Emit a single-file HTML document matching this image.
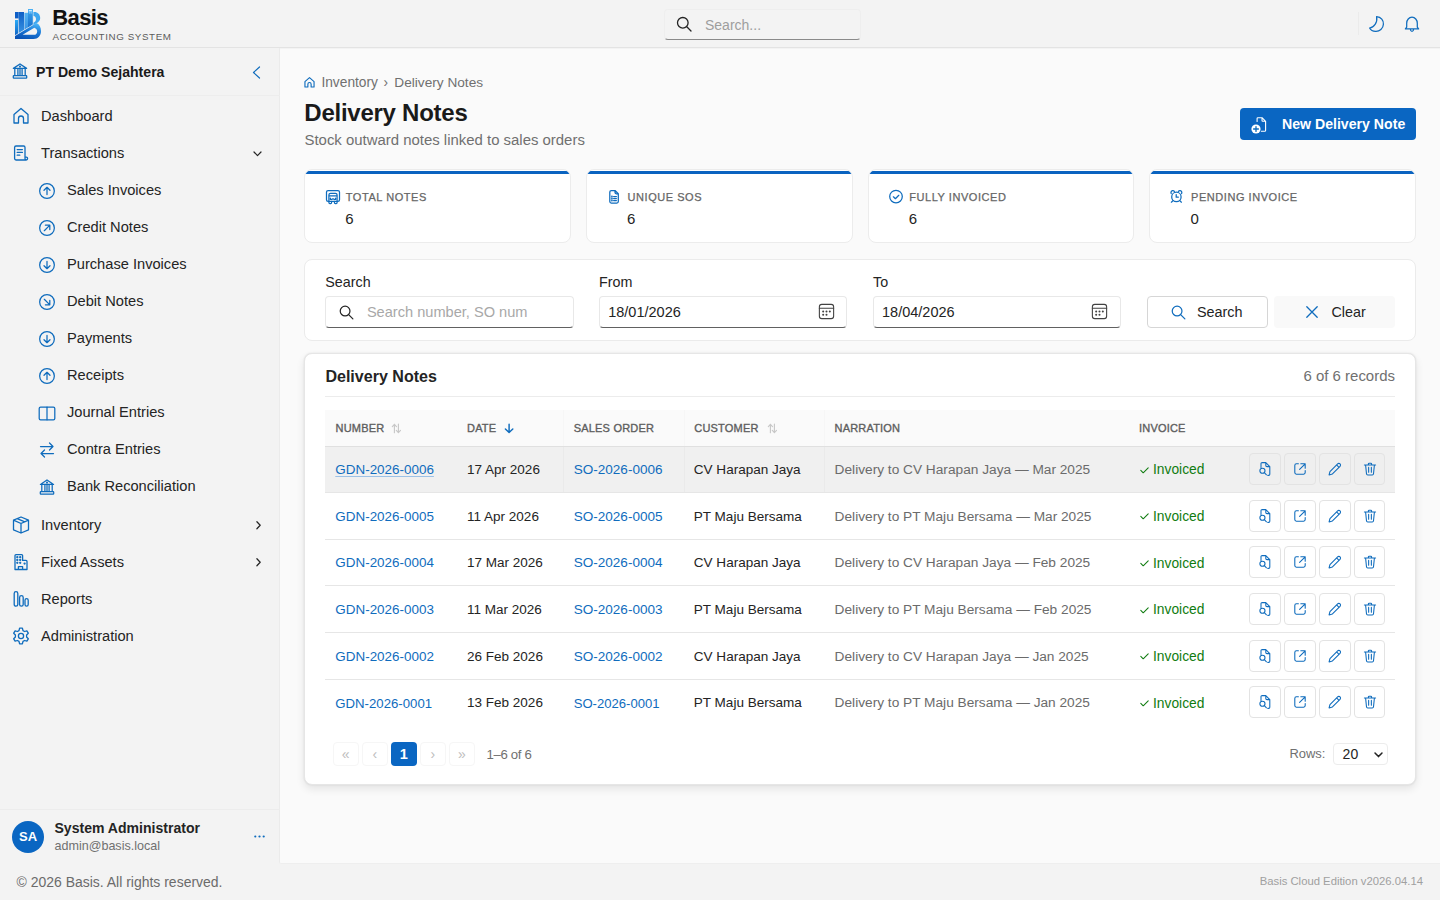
<!DOCTYPE html>
<html><head><meta charset="utf-8">
<style>
*{box-sizing:border-box;margin:0;padding:0}
html,body{width:1440px;height:900px;overflow:hidden}
body{font-family:"Liberation Sans",sans-serif;color:#242424;background:#fafafa;position:relative}
.a{position:absolute;white-space:nowrap;line-height:1}
svg{position:absolute;overflow:visible}
.bx{position:absolute}
</style></head><body>
<div class="bx" style="left:0;top:0;width:1440px;height:48px;background:#f3f3f3;border-bottom:1px solid #e3e3e3"></div>
<div class="bx" style="left:0;top:48px;width:280px;height:852px;background:#f3f3f3"></div>
<div class="bx" style="left:279px;top:48px;width:1161px;height:816px;background:#fafafa;border-left:1px solid #ebebeb;border-bottom:1px solid #eeeeee;border-bottom-left-radius:2px;box-shadow:inset 0 1px 1px rgba(0,0,0,0.03)"></div>
<div class="bx" style="left:280px;top:864px;width:1160px;height:36px;background:#f3f3f3"></div>
<svg style="left:12px;top:6px" width="32" height="36" viewBox="0 0 32 36">
<defs>
<linearGradient id="lg1" x1="0" y1="0" x2="0" y2="1"><stop offset="0" stop-color="#2aaaf6"/><stop offset="1" stop-color="#0b58bd"/></linearGradient>
<linearGradient id="lg3" x1="0" y1="0" x2="0" y2="1"><stop offset="0" stop-color="#0e5ec6"/><stop offset="1" stop-color="#3f9fe8"/></linearGradient>
<linearGradient id="lg4" x1="0" y1="0" x2="0" y2="1"><stop offset="0" stop-color="#55b4f2"/><stop offset="1" stop-color="#2a82dc"/></linearGradient>
<linearGradient id="lg5" x1="0" y1="0" x2="0" y2="1"><stop offset="0" stop-color="#3aa6f0"/><stop offset="1" stop-color="#0c5cc0"/></linearGradient>
<linearGradient id="lg2" x1="0.7" y1="0" x2="0.3" y2="1"><stop offset="0" stop-color="#4ab4f6"/><stop offset="0.45" stop-color="#1b7ad8"/><stop offset="1" stop-color="#0a52b4"/></linearGradient>
<clipPath id="cp1"><path d="M0 0 H32 V11.8 L3 29.2 L0 29.2 Z"/></clipPath>
</defs>
<g clip-path="url(#cp1)">
<rect x="3" y="14" width="3" height="18" fill="url(#lg1)"/>
<rect x="3" y="6" width="3.6" height="6.4" fill="#0e5ec6"/>
<rect x="6.6" y="6" width="5.4" height="26" fill="url(#lg3)"/>
<rect x="12.4" y="6.8" width="3.6" height="26" fill="url(#lg4)"/>
<rect x="16" y="3" width="4.8" height="26" fill="url(#lg5)"/>
</g>
<rect x="16" y="3" width="4.8" height="3.4" fill="#4ab0f4"/><rect x="16.9" y="4.2" width="3" height="1.1" fill="#eef7ff"/>
<rect x="16.9" y="6.6" width="1.6" height="0.7" fill="#cfe7ff"/><rect x="19" y="6.6" width="0.9" height="0.7" fill="#cfe7ff"/>
<path fill-rule="evenodd" d="M21.4 6 H22.4 C25.8 6 28.2 8.6 28.2 12 C28.2 14.4 26.8 16.2 24.6 17.2 L21.4 19 Z M21.5 10 C23.2 10.2 24 11.6 24 13.2 C24 14.6 23.1 15.8 21.5 16.7 Z" fill="#3ea6ef"/>

<path fill-rule="evenodd" d="M3 29.9 L24.4 17 C27.6 18.4 29 21.6 29 25 C29 29.6 26 33 21.5 33 H3 Z M10.6 28.8 L22.3 21.7 C24.4 22.4 25.2 24 25.2 25.4 C25.2 27.4 23.8 28.8 22 28.8 Z" fill="url(#lg2)"/>
</svg>
<div class="a " style="left:52.3px;top:7.30px;font-size:22px;font-weight:700;color:#111;letter-spacing:-0.6px">Basis</div>
<div class="a " style="left:52.5px;top:31.97px;font-size:9.8px;letter-spacing:0.6px;color:#5c5c5c">ACCOUNTING SYSTEM</div>
<div class="bx" style="left:664px;top:9px;width:197px;height:31px;background:#f3f3f3;border:1px solid #eeeeee;border-bottom:1px solid #8a8a8a;border-radius:4px"></div>
<svg style="left:676px;top:16px" width="16" height="16" viewBox="0 0 16 16"><g style="fill:none;stroke:#242424;stroke-linecap:round;stroke-linejoin:round;stroke-width:1.3" ><circle cx="6.8" cy="6.8" r="5.3"/><path d="M10.8 10.8 L15 15"/></g></svg>
<div class="a " style="left:705px;top:17.60px;font-size:14px;color:#9e9e9e">Search...</div>
<div class="bx" style="left:1358px;top:12px;width:1px;height:23px;background:#ebebeb"></div>
<svg style="left:1366px;top:14px" width="20" height="20" viewBox="0 0 20 20"><g style="fill:none;stroke:#0f6cbd;stroke-linecap:round;stroke-linejoin:round;stroke-width:1.25" ><path d="M10.6 2.6 C 15.2 3 17.6 6.6 17.4 10.2 C 17.2 14.6 13.6 17.6 9.6 17.4 C 7 17.3 4.4 15.6 3.6 14 C 7.8 13.6 11.8 8.6 10.6 2.6 Z"/></g></svg>
<svg style="left:1402px;top:15px" width="20" height="20" viewBox="0 0 20 20"><g style="fill:none;stroke:#0f6cbd;stroke-linecap:round;stroke-linejoin:round;stroke-width:1.25" ><path d="M3.4 13.9 H16.6 L15.3 12.2 V8.2 C15.3 5 13 2.2 10 2.2 C7 2.2 4.7 5 4.7 8.2 V12.2 Z M8.4 14.2 C8.5 15.7 9.2 16.4 10 16.4 C10.8 16.4 11.5 15.7 11.6 14.2"/></g></svg>
<svg style="left:10.2px;top:61.4px" width="20" height="20" viewBox="0 0 20 20"><g style="fill:none;stroke:#0f6cbd;stroke-linecap:round;stroke-linejoin:round;stroke-width:1.3" ><path d="M3.4 7.4 L10 3 L16.6 7.4 Z"/><path d="M4.8 8.2 V13.8 M7.9 8.2 V13.8 M10 8.2 V13.8 M12.1 8.2 V13.8 M15.2 8.2 V13.8"/><rect x="3.3" y="14.6" width="13.4" height="2.6" rx="0.6"/><circle cx="10" cy="5.6" r="0.45"/></g></svg>
<div class="a " style="left:36px;top:65.02px;font-size:14.1px;font-weight:700;color:#1a1a1a">PT Demo Sejahtera</div>
<svg style="left:252px;top:66px" width="9" height="13" viewBox="0 0 9 13"><g style="fill:none;stroke:#0f6cbd;stroke-linecap:round;stroke-linejoin:round;stroke-width:1.2" ><path d="M7.5 1 L1.5 6.5 L7.5 12"/></g></svg>
<div class="bx" style="left:0;top:95px;width:280px;height:1px;background:#ededed"></div>
<svg style="left:10.5px;top:106.1px" width="20" height="20" viewBox="0 0 20 20"><g style="fill:none;stroke:#0f6cbd;stroke-linecap:round;stroke-linejoin:round;stroke-width:1.3" ><path d="M3 17 V8.6 L10 2.5 L17 8.6 V17 H12.5 V12.5 C12.5 11 11.4 10 10 10 C8.6 10 7.5 11 7.5 12.5 V17 Z"/></g></svg>
<div class="a " style="left:41px;top:108.75px;font-size:14.65px;color:#242424">Dashboard</div>
<svg style="left:10.5px;top:142.9px" width="20" height="20" viewBox="0 0 20 20"><g style="fill:none;stroke:#0f6cbd;stroke-linecap:round;stroke-linejoin:round;stroke-width:1.3" ><path d="M14 14.2 V4.4 C14 3.6 13.4 3 12.6 3 H5 C4.2 3 3.6 3.6 3.6 4.4 V15.6 C3.6 16.4 4.2 17 5 17 H15.2 C16 17 16.6 16.4 16.6 15.6 V15.4 C16.6 14.7 16 14.2 15.3 14.2 H14 M14 14.2 V15.6 C14 16.4 14.6 17 15.2 17 M6.2 6.6 H11.4 M6.2 9.4 H11.4 M6.2 12.2 H8.8"/></g></svg>
<div class="a " style="left:41px;top:145.55px;font-size:14.65px;color:#242424">Transactions</div>
<svg style="left:252.5px;top:150.9px" width="9" height="6" viewBox="0 0 9 6"><g style="fill:none;stroke:#242424;stroke-linecap:round;stroke-linejoin:round;stroke-width:1.2" ><path d="M1 1 L4.5 4.6 L8 1"/></g></svg>
<svg style="left:36.9px;top:180.8px" width="20" height="20" viewBox="0 0 20 20"><g style="fill:none;stroke:#0f6cbd;stroke-linecap:round;stroke-linejoin:round;stroke-width:1.25" ><circle cx="10" cy="10" r="7.35"/><path d="M10 13.6 V6.4 M7 9.3 L10 6.3 L13 9.3"/></g></svg>
<div class="a " style="left:67px;top:182.55px;font-size:14.65px;color:#242424">Sales Invoices</div>
<svg style="left:36.9px;top:217.8px" width="20" height="20" viewBox="0 0 20 20"><g style="fill:none;stroke:#0f6cbd;stroke-linecap:round;stroke-linejoin:round;stroke-width:1.25" ><circle cx="10" cy="10" r="7.35"/><path d="M7.3 12.7 L12.6 7.4 M8.4 7.2 H12.8 V11.6"/></g></svg>
<div class="a " style="left:67px;top:219.55px;font-size:14.65px;color:#242424">Credit Notes</div>
<svg style="left:36.9px;top:254.79999999999998px" width="20" height="20" viewBox="0 0 20 20"><g style="fill:none;stroke:#0f6cbd;stroke-linecap:round;stroke-linejoin:round;stroke-width:1.25" ><circle cx="10" cy="10" r="7.35"/><path d="M10 6.4 V13.6 M7 10.7 L10 13.7 L13 10.7"/></g></svg>
<div class="a " style="left:67px;top:256.55px;font-size:14.65px;color:#242424">Purchase Invoices</div>
<svg style="left:36.9px;top:291.79999999999995px" width="20" height="20" viewBox="0 0 20 20"><g style="fill:none;stroke:#0f6cbd;stroke-linecap:round;stroke-linejoin:round;stroke-width:1.25" ><circle cx="10" cy="10" r="7.35"/><path d="M7.3 7.3 L12.6 12.6 M12.8 8.4 V12.8 H8.4"/></g></svg>
<div class="a " style="left:67px;top:293.55px;font-size:14.65px;color:#242424">Debit Notes</div>
<svg style="left:36.9px;top:328.79999999999995px" width="20" height="20" viewBox="0 0 20 20"><g style="fill:none;stroke:#0f6cbd;stroke-linecap:round;stroke-linejoin:round;stroke-width:1.25" ><circle cx="10" cy="10" r="7.35"/><path d="M10 6.4 V13.6 M7 10.7 L10 13.7 L13 10.7"/></g></svg>
<div class="a " style="left:67px;top:330.55px;font-size:14.65px;color:#242424">Payments</div>
<svg style="left:36.9px;top:365.79999999999995px" width="20" height="20" viewBox="0 0 20 20"><g style="fill:none;stroke:#0f6cbd;stroke-linecap:round;stroke-linejoin:round;stroke-width:1.25" ><circle cx="10" cy="10" r="7.35"/><path d="M10 13.6 V6.4 M7 9.3 L10 6.3 L13 9.3"/></g></svg>
<div class="a " style="left:67px;top:367.55px;font-size:14.65px;color:#242424">Receipts</div>
<svg style="left:36.9px;top:402.79999999999995px" width="20" height="20" viewBox="0 0 20 20"><g style="fill:none;stroke:#0f6cbd;stroke-linecap:round;stroke-linejoin:round;stroke-width:1.25" ><rect x="2.2" y="4.2" width="15.6" height="12.6" rx="1.4"/><path d="M10 4.2 V16.8"/></g></svg>
<div class="a " style="left:67px;top:404.55px;font-size:14.65px;color:#242424">Journal Entries</div>
<svg style="left:36.9px;top:439.79999999999995px" width="20" height="20" viewBox="0 0 20 20"><g style="fill:none;stroke:#0f6cbd;stroke-linecap:round;stroke-linejoin:round;stroke-width:1.25" ><path d="M3.5 6.5 H16 M12.5 3 L16 6.5 L12.5 10 M16.5 13.5 H4 M7.5 10 L4 13.5 L7.5 17"/></g></svg>
<div class="a " style="left:67px;top:441.55px;font-size:14.65px;color:#242424">Contra Entries</div>
<svg style="left:36.9px;top:476.79999999999995px" width="20" height="20" viewBox="0 0 20 20"><g style="fill:none;stroke:#0f6cbd;stroke-linecap:round;stroke-linejoin:round;stroke-width:1.25" ><path d="M3.4 7.4 L10 3 L16.6 7.4 Z"/><path d="M4.8 8.2 V13.8 M7.9 8.2 V13.8 M10 8.2 V13.8 M12.1 8.2 V13.8 M15.2 8.2 V13.8"/><rect x="3.3" y="14.6" width="13.4" height="2.6" rx="0.6"/><circle cx="10" cy="5.6" r="0.45"/></g></svg>
<div class="a " style="left:67px;top:478.55px;font-size:14.65px;color:#242424">Bank Reconciliation</div>
<svg style="left:10.5px;top:514.9px" width="20" height="20" viewBox="0 0 20 20"><g style="fill:none;stroke:#0f6cbd;stroke-linecap:round;stroke-linejoin:round;stroke-width:1.3" ><path d="M10 2 L17.5 5.2 V14.8 L10 18 L2.5 14.8 V5.2 Z M2.5 5.2 L10 8.5 L17.5 5.2 M10 8.5 V18 M6.2 3.6 L13.8 6.9"/></g></svg>
<div class="a " style="left:41px;top:517.55px;font-size:14.65px;color:#242424">Inventory</div>
<svg style="left:255.5px;top:520.6999999999999px" width="5" height="8.5" viewBox="0 0 5 9"><g style="fill:none;stroke:#242424;stroke-linecap:round;stroke-linejoin:round;stroke-width:1.3" ><path d="M0.8 0.8 L4.3 4.5 L0.8 8.2"/></g></svg>
<svg style="left:10.5px;top:552.4px" width="20" height="20" viewBox="0 0 20 20"><g style="fill:none;stroke:#0f6cbd;stroke-linecap:round;stroke-linejoin:round;stroke-width:1.3" ><path d="M4 17.5 V3.6 C4 3 4.4 2.6 5 2.6 H10.6 C11.2 2.6 11.6 3 11.6 3.6 V8.4 H15 C15.6 8.4 16 8.8 16 9.4 V17.5 Z M7.4 17.5 V14.6 H11.6 V17.5"/><circle cx="6.3" cy="5.2" r="0.5"/><circle cx="9.2" cy="5.2" r="0.5"/><circle cx="6.3" cy="8" r="0.5"/><circle cx="9.2" cy="8" r="0.5"/><circle cx="6.3" cy="10.8" r="0.5"/><circle cx="9.2" cy="10.8" r="0.5"/><circle cx="13.6" cy="11.6" r="0.5"/></g></svg>
<div class="a " style="left:41px;top:555.05px;font-size:14.65px;color:#242424">Fixed Assets</div>
<svg style="left:255.5px;top:558.1999999999999px" width="5" height="8.5" viewBox="0 0 5 9"><g style="fill:none;stroke:#242424;stroke-linecap:round;stroke-linejoin:round;stroke-width:1.3" ><path d="M0.8 0.8 L4.3 4.5 L0.8 8.2"/></g></svg>
<svg style="left:10.5px;top:589.4px" width="20" height="20" viewBox="0 0 20 20"><g style="fill:none;stroke:#0f6cbd;stroke-linecap:round;stroke-linejoin:round;stroke-width:1.3" ><rect x="3.2" y="2.6" width="3.6" height="14.6" rx="1.8"/><rect x="8.6" y="6.6" width="3.6" height="10.6" rx="1.8"/><rect x="14" y="9.6" width="3.2" height="7.6" rx="1.6"/></g></svg>
<div class="a " style="left:41px;top:592.05px;font-size:14.65px;color:#242424">Reports</div>
<svg style="left:10.5px;top:626.2px" width="20" height="20" viewBox="0 0 20 20"><g style="fill:none;stroke:#0f6cbd;stroke-linecap:round;stroke-linejoin:round;stroke-width:1.3" ><path d="M8.6 2.2 L11.4 2.2 L12 4.6 L13.6 5.5 L15.9 4.8 L17.3 7.2 L15.6 9 V11 L17.3 12.8 L15.9 15.2 L13.6 14.5 L12 15.4 L11.4 17.8 H8.6 L8 15.4 L6.4 14.5 L4.1 15.2 L2.7 12.8 L4.4 11 V9 L2.7 7.2 L4.1 4.8 L6.4 5.5 L8 4.6 Z"/><circle cx="10" cy="10" r="2.6"/></g></svg>
<div class="a " style="left:41px;top:628.85px;font-size:14.65px;color:#242424">Administration</div>
<div class="bx" style="left:0;top:809px;width:280px;height:1px;background:#ececec"></div>
<div class="bx" style="left:12px;top:820.5px;width:32px;height:32px;border-radius:50%;background:#0a66c2"></div>
<div class="a " style="left:16.5px;top:829.95px;font-size:13px;font-weight:700;color:#fff;width:23px;text-align:center">SA</div>
<div class="a " style="left:54.5px;top:821.06px;font-size:14.05px;font-weight:700;color:#242424">System Administrator</div>
<div class="a " style="left:54.5px;top:839.53px;font-size:12.55px;color:#707070">admin@basis.local</div>
<svg style="left:254px;top:835px" width="11" height="3" viewBox="0 0 11 3"><circle cx="1.3" cy="1.5" r="1.1" fill="#0f6cbd"/><circle cx="5.5" cy="1.5" r="1.1" fill="#0f6cbd"/><circle cx="9.7" cy="1.5" r="1.1" fill="#0f6cbd"/></svg>
<div class="a " style="left:16.5px;top:876.03px;font-size:13.97px;color:#6b6b6b">© 2026 Basis. All rights reserved.</div>
<div class="a " style="right:17px;top:875.89px;font-size:11.3px;color:#a0a0a0">Basis Cloud Edition v2026.04.14</div>
<svg style="left:303px;top:75.8px" width="13" height="13" viewBox="0 0 20 20"><g style="fill:none;stroke:#0f6cbd;stroke-linecap:round;stroke-linejoin:round;stroke-width:1.75" ><path d="M3 17 V8.6 L10 2.5 L17 8.6 V17 H12.5 V12.5 C12.5 11 11.4 10 10 10 C8.6 10 7.5 11 7.5 12.5 V17 Z"/></g></svg>
<div class="a " style="left:321.4px;top:76.00px;font-size:13.76px;color:#707070">Inventory</div>
<div class="a " style="left:383.5px;top:76.00px;font-size:13.76px;color:#707070">›</div>
<div class="a " style="left:394.3px;top:76.08px;font-size:13.67px;color:#707070">Delivery Notes</div>
<div class="a " style="left:304.3px;top:101.10px;font-size:24px;font-weight:700;color:#1a1a1a;letter-spacing:-0.25px">Delivery Notes</div>
<div class="a " style="left:304.5px;top:133.11px;font-size:14.93px;color:#707070">Stock outward notes linked to sales orders</div>
<div class="bx" style="left:1240px;top:108px;width:176px;height:32px;background:#0a66c2;border-radius:4px"></div>
<svg style="left:1252px;top:115.5px" width="17" height="17" viewBox="0 0 20 20"><g style="fill:none;stroke:#fff;stroke-linecap:round;stroke-linejoin:round;stroke-width:1.3" ><path d="M6 6.5 V3 C6 2.4 6.4 2 7 2 H11.8 L16 6.2 V17 C16 17.6 15.6 18 15 18 H11 M11.8 2 V5.5 C11.8 6 12.2 6.2 12.6 6.2 H16"/></g></svg>
<svg style="left:1251.3px;top:123.5px" width="10" height="10" viewBox="0 0 10 10"><circle cx="5" cy="5" r="4.6" fill="#fff"/><path d="M5 2.6 V7.4 M2.6 5 H7.4" stroke="#0f6cbd" stroke-width="1.3" stroke-linecap="round"/></svg>
<div class="a " style="left:1282px;top:117.29px;font-size:14.13px;font-weight:700;color:#fff">New Delivery Note</div>
<div class="bx" style="left:304px;top:169.4px;width:266.75px;height:73.6px;background:#fff;border:1px solid #ececec;border-radius:8px;overflow:hidden"><div class="bx" style="left:0;top:0.6px;width:265px;height:2.6px;background:#0a63c0"></div></div>
<svg style="left:325px;top:189px" width="16" height="16" viewBox="0 0 16 16"><g style="fill:none;stroke:#0f6cbd;stroke-linecap:round;stroke-linejoin:round;stroke-width:1.25" ><rect x="1.5" y="1.5" width="13" height="10.8" rx="1.6"/><path d="M3.9 12.2 V6 Q3.9 4.4 5.5 4.4 H10.5 Q12.1 4.4 12.1 6 V12.2 M3.9 6.9 H12.1 M5.4 9.2 V10.4 H6.6 M9.4 10.4 H10.6 V9.2 M7.3 10.2 L8 9.6 L8.7 10.2 M3.9 12.3 V13.6 Q3.9 14.6 4.9 14.6 H5.6 Q6.6 14.6 6.6 13.6 V12.4 M9.4 12.4 V13.6 Q9.4 14.6 10.4 14.6 H11.1 Q12.1 14.6 12.1 13.6 V12.3"/></g></svg>
<div class="a " style="left:345.8px;top:191.65px;font-size:11px;color:#666;letter-spacing:0.55px;-webkit-text-stroke:0.25px #666">TOTAL NOTES</div>
<div class="a " style="left:345.3px;top:211.25px;font-size:15px;color:#242424">6</div>
<div class="bx" style="left:585.75px;top:169.4px;width:266.75px;height:73.6px;background:#fff;border:1px solid #ececec;border-radius:8px;overflow:hidden"><div class="bx" style="left:0;top:0.6px;width:265px;height:2.6px;background:#0a63c0"></div></div>
<svg style="left:606.75px;top:189px" width="16" height="16" viewBox="0 0 16 16"><g style="fill:none;stroke:#0f6cbd;stroke-linecap:round;stroke-linejoin:round;stroke-width:1.25" ><path d="M2.8 3 Q2.8 1.5 4.3 1.5 H8 L11.3 4.8 V12.6 Q11.3 14.1 9.8 14.1 H4.3 Q2.8 14.1 2.8 12.6 Z M8 1.5 V3.6 Q8 4.8 9.2 4.8 H11.3 M6.6 7.5 H9.4 M6.6 9.5 H9.4 M6.6 11.5 H9.4"/><circle cx="4.9" cy="7.5" r="0.35"/><circle cx="4.9" cy="9.5" r="0.35"/><circle cx="4.9" cy="11.5" r="0.35"/></g></svg>
<div class="a " style="left:627.55px;top:191.65px;font-size:11px;color:#666;letter-spacing:0.55px;-webkit-text-stroke:0.25px #666">UNIQUE SOS</div>
<div class="a " style="left:627.05px;top:211.25px;font-size:15px;color:#242424">6</div>
<div class="bx" style="left:867.5px;top:169.4px;width:266.75px;height:73.6px;background:#fff;border:1px solid #ececec;border-radius:8px;overflow:hidden"><div class="bx" style="left:0;top:0.6px;width:265px;height:2.6px;background:#0a63c0"></div></div>
<svg style="left:888.5px;top:189px" width="16" height="16" viewBox="0 0 16 16"><g style="fill:none;stroke:#0f6cbd;stroke-linecap:round;stroke-linejoin:round;stroke-width:1.25" ><circle cx="7" cy="7.6" r="6.3"/><path d="M4.4 7.8 L6.4 9.7 L9.8 6.3"/></g></svg>
<div class="a " style="left:909.3px;top:191.65px;font-size:11px;color:#666;letter-spacing:0.55px;-webkit-text-stroke:0.25px #666">FULLY INVOICED</div>
<div class="a " style="left:908.8px;top:211.25px;font-size:15px;color:#242424">6</div>
<div class="bx" style="left:1149.25px;top:169.4px;width:266.75px;height:73.6px;background:#fff;border:1px solid #ececec;border-radius:8px;overflow:hidden"><div class="bx" style="left:0;top:0.6px;width:265px;height:2.6px;background:#0a63c0"></div></div>
<svg style="left:1170.25px;top:189px" width="16" height="16" viewBox="0 0 16 16"><g style="fill:none;stroke:#0f6cbd;stroke-linecap:round;stroke-linejoin:round;stroke-width:1.25" ><circle cx="6.4" cy="7.9" r="4.7"/><path d="M6.2 5.6 V8.2 H8.3 M1.2 4.6 Q0.4 2.2 2.6 1.6 Q3.6 1.4 4.4 2.4 M11.6 4.6 Q12.4 2.2 10.2 1.6 Q9.2 1.4 8.4 2.4 M3 11.6 L1.4 13.2 M9.8 11.6 L11.4 13.2"/></g></svg>
<div class="a " style="left:1191.05px;top:191.65px;font-size:11px;color:#666;letter-spacing:0.55px;-webkit-text-stroke:0.25px #666">PENDING INVOICE</div>
<div class="a " style="left:1190.55px;top:211.25px;font-size:15px;color:#242424">0</div>
<div class="bx" style="left:304px;top:259px;width:1112px;height:82px;background:#fff;border:1px solid #ebebeb;border-radius:8px"></div>
<div class="a " style="left:325.3px;top:274.64px;font-size:14.3px;color:#242424">Search</div>
<div class="a " style="left:599px;top:274.64px;font-size:14.3px;color:#242424">From</div>
<div class="a " style="left:873px;top:274.64px;font-size:14.3px;color:#242424">To</div>
<div class="bx" style="left:325px;top:296px;width:249px;height:32px;background:#fff;border:1px solid #e8e8e8;border-bottom:1px solid #616161;border-radius:4px"></div>
<div class="bx" style="left:599px;top:296px;width:248px;height:32px;background:#fff;border:1px solid #e8e8e8;border-bottom:1px solid #616161;border-radius:4px"></div>
<div class="bx" style="left:873px;top:296px;width:248px;height:32px;background:#fff;border:1px solid #e8e8e8;border-bottom:1px solid #616161;border-radius:4px"></div>
<svg style="left:339px;top:305px" width="15" height="15" viewBox="0 0 16 16"><g style="fill:none;stroke:#242424;stroke-linecap:round;stroke-linejoin:round;stroke-width:1.3" ><circle cx="6.5" cy="6.5" r="5.2"/><path d="M10.3 10.3 L14.8 14.8"/></g></svg>
<div class="a " style="left:366.9px;top:304.79px;font-size:14.6px;color:#a8a8a8">Search number, SO num</div>
<div class="a " style="left:608.2px;top:304.88px;font-size:14.5px;color:#242424">18/01/2026</div>
<div class="a " style="left:882px;top:304.88px;font-size:14.5px;color:#242424">18/04/2026</div>
<svg style="left:816.6px;top:302px" width="19" height="19" viewBox="0 0 20 20"><g style="fill:none;stroke:#424242;stroke-linecap:round;stroke-linejoin:round;stroke-width:1.15" ><rect x="2.5" y="2.5" width="15" height="15" rx="2.5"/><path d="M2.5 6.5 H17.5"/><circle cx="6.5" cy="10" r="0.5"/><circle cx="10" cy="10" r="0.5"/><circle cx="13.5" cy="10" r="0.5"/><circle cx="6.5" cy="13.5" r="0.5"/><circle cx="10" cy="13.5" r="0.5"/></g></svg>
<svg style="left:1090.2px;top:302px" width="19" height="19" viewBox="0 0 20 20"><g style="fill:none;stroke:#424242;stroke-linecap:round;stroke-linejoin:round;stroke-width:1.15" ><rect x="2.5" y="2.5" width="15" height="15" rx="2.5"/><path d="M2.5 6.5 H17.5"/><circle cx="6.5" cy="10" r="0.5"/><circle cx="10" cy="10" r="0.5"/><circle cx="13.5" cy="10" r="0.5"/><circle cx="6.5" cy="13.5" r="0.5"/><circle cx="10" cy="13.5" r="0.5"/></g></svg>
<div class="bx" style="left:1146.5px;top:296px;width:121px;height:32px;background:#fff;border:1px solid #d6d6d6;border-radius:4px"></div>
<svg style="left:1170.5px;top:304.5px" width="15" height="15" viewBox="0 0 16 16"><g style="fill:none;stroke:#0f6cbd;stroke-linecap:round;stroke-linejoin:round;stroke-width:1.3" ><circle cx="6.5" cy="6.5" r="5.2"/><path d="M10.3 10.3 L14.8 14.8"/></g></svg>
<div class="a " style="left:1197px;top:304.97px;font-size:14.39px;color:#242424">Search</div>
<div class="bx" style="left:1274px;top:296px;width:121px;height:32px;background:#f9f9f9;border-radius:4px"></div>
<svg style="left:1305.5px;top:306px" width="12" height="12" viewBox="0 0 12 12"><g style="fill:none;stroke:#0f6cbd;stroke-linecap:round;stroke-linejoin:round;stroke-width:1.3" ><path d="M0.8 0.8 L11.2 11.2 M11.2 0.8 L0.8 11.2"/></g></svg>
<div class="a " style="left:1331.5px;top:305.04px;font-size:14.31px;color:#242424">Clear</div>
<div class="bx" style="left:304px;top:353px;width:1112px;height:432px;background:#fff;border:1px solid #e6e6e6;border-radius:8px;box-shadow:0 0 2px rgba(0,0,0,0.10),0 4px 8px rgba(0,0,0,0.09)"></div>
<div class="a " style="left:325.4px;top:367.85px;font-size:16.06px;font-weight:700;color:#242424">Delivery Notes</div>
<div class="a " style="right:45px;top:367.57px;font-size:14.98px;color:#707070">6 of 6 records</div>
<div class="bx" style="left:325px;top:395.5px;width:1070px;height:1px;background:#ececec"></div>
<div class="bx" style="left:325px;top:410px;width:1070px;height:37px;background:#fafafa;border-bottom:1px solid #e0e0e0"></div>
<div class="a " style="left:335.5px;top:422.65px;font-size:11px;color:#5e5e5e;letter-spacing:0.2px;-webkit-text-stroke:0.35px #5e5e5e">NUMBER</div>
<div class="a " style="left:467px;top:422.65px;font-size:11px;color:#5e5e5e;letter-spacing:0.2px;-webkit-text-stroke:0.35px #5e5e5e">DATE</div>
<div class="a " style="left:573.7px;top:422.65px;font-size:11px;color:#5e5e5e;letter-spacing:0.2px;-webkit-text-stroke:0.35px #5e5e5e">SALES ORDER</div>
<div class="a " style="left:694.3px;top:422.65px;font-size:11px;color:#5e5e5e;letter-spacing:0.2px;-webkit-text-stroke:0.35px #5e5e5e">CUSTOMER</div>
<div class="a " style="left:834.5px;top:422.65px;font-size:11px;color:#5e5e5e;letter-spacing:0.2px;-webkit-text-stroke:0.35px #5e5e5e">NARRATION</div>
<div class="a " style="left:1139px;top:422.65px;font-size:11px;color:#5e5e5e;letter-spacing:0.2px;-webkit-text-stroke:0.35px #5e5e5e">INVOICE</div>
<svg style="left:390px;top:422px" width="12" height="12" viewBox="0 0 12 12"><g style="fill:none;stroke:#c8c8c8;stroke-linecap:round;stroke-linejoin:round;stroke-width:1.15" ><path d="M4.4 2.4 V10.7 M2.3 4.6 L4.4 2.3 L6.5 4.6 M8.4 2 V10.3 M6.3 8.4 L8.4 10.7 L10.5 8.4"/></g></svg>
<svg style="left:765.5px;top:422px" width="12" height="12" viewBox="0 0 12 12"><g style="fill:none;stroke:#c8c8c8;stroke-linecap:round;stroke-linejoin:round;stroke-width:1.15" ><path d="M4.4 2.4 V10.7 M2.3 4.6 L4.4 2.3 L6.5 4.6 M8.4 2 V10.3 M6.3 8.4 L8.4 10.7 L10.5 8.4"/></g></svg>
<svg style="left:503px;top:422px" width="12" height="12" viewBox="0 0 12 12"><g style="fill:none;stroke:#0f6cbd;stroke-linecap:round;stroke-linejoin:round;stroke-width:1.45" ><path d="M6.1 2.2 V10.2 M2.4 6.9 L6.1 10.5 L9.8 6.9"/></g></svg>
<div class="bx" style="left:563px;top:410px;width:1px;height:36px;background:#f6f6f6"></div>
<div class="bx" style="left:684px;top:410px;width:1px;height:36px;background:#f6f6f6"></div>
<div class="bx" style="left:824px;top:410px;width:1px;height:36px;background:#f6f6f6"></div>
<div class="bx" style="left:325px;top:446.50px;width:1070px;height:46.67px;background:#f0f0f0;border-bottom:1px solid #e6e6e6;"></div>
<div class="bx" style="left:563px;top:446.50px;width:1px;height:45.67px;background:#eaeaea"></div>
<div class="bx" style="left:684px;top:446.50px;width:1px;height:45.67px;background:#eaeaea"></div>
<div class="bx" style="left:824px;top:446.50px;width:1px;height:45.67px;background:#eaeaea"></div>
<div class="a " style="left:335.3px;top:463.10px;font-size:13.45px;text-decoration:underline;text-decoration-color:#9cc1e6;text-underline-offset:2px;color:#0f6cbd">GDN-2026-0006</div>
<div class="a " style="left:467px;top:463.03px;font-size:13.53px;color:#242424">17 Apr 2026</div>
<div class="a " style="left:573.7px;top:463.02px;font-size:13.55px;color:#0f6cbd">SO-2026-0006</div>
<div class="a " style="left:693.8px;top:463.03px;font-size:13.54px;color:#242424">CV Harapan Jaya</div>
<div class="a " style="left:834.6px;top:462.90px;font-size:13.69px;color:#6b6b6b">Delivery to CV Harapan Jaya — Mar 2025</div>
<svg style="left:1140px;top:466.53499999999997px" width="9" height="7" viewBox="0 0 9 7"><g style="fill:none;stroke:#107c10;stroke-linecap:round;stroke-linejoin:round;stroke-width:1.05" ><path d="M0.8 3.4 L3.2 5.8 L8.2 0.8"/></g></svg>
<div class="a " style="left:1153px;top:463.30px;font-size:13.8px;color:#107c10">Invoiced</div>
<div class="bx" style="left:1249.4px;top:452.93px;width:31.5px;height:32px;background:#efefef;border:1px solid #e3e3e3;border-radius:4px"></div>
<svg style="left:1257.15px;top:460.93499999999995px" width="16" height="16" viewBox="0 0 20 20"><g style="fill:none;stroke:#0f6cbd;stroke-linecap:round;stroke-linejoin:round;stroke-width:1.35" ><path d="M5 8 V3.5 C5 2.7 5.7 2 6.5 2 H11 L16 7 V16.5 C16 17.3 15.3 18 14.5 18 H13.5 M11 2 V5.5 C11 6.3 11.7 7 12.5 7 H16"/><circle cx="6.8" cy="12.2" r="3.2"/><path d="M9.2 14.6 L11.8 17.2"/></g></svg>
<div class="bx" style="left:1284.2px;top:452.93px;width:31.5px;height:32px;background:#efefef;border:1px solid #e3e3e3;border-radius:4px"></div>
<svg style="left:1291.95px;top:460.93499999999995px" width="16" height="16" viewBox="0 0 20 20"><g style="fill:none;stroke:#0f6cbd;stroke-linecap:round;stroke-linejoin:round;stroke-width:1.35" ><path d="M8 3.5 H5.5 C4.4 3.5 3.5 4.4 3.5 5.5 V14.5 C3.5 15.6 4.4 16.5 5.5 16.5 H14.5 C15.6 16.5 16.5 15.6 16.5 14.5 V12 M11 3.5 H16.5 V9 M16.5 3.5 L9.5 10.5"/></g></svg>
<div class="bx" style="left:1319.0px;top:452.93px;width:31.5px;height:32px;background:#efefef;border:1px solid #e3e3e3;border-radius:4px"></div>
<svg style="left:1326.75px;top:460.93499999999995px" width="16" height="16" viewBox="0 0 20 20"><g style="fill:none;stroke:#0f6cbd;stroke-linecap:round;stroke-linejoin:round;stroke-width:1.35" ><path d="M2.6 17.4 L3.7 13.2 L13.3 3.6 C14.1 2.8 15.5 2.8 16.3 3.6 C17.1 4.4 17.1 5.8 16.3 6.6 L6.8 16.2 Z M12 4.9 L15 7.9"/></g></svg>
<div class="bx" style="left:1353.8px;top:452.93px;width:31.5px;height:32px;background:#efefef;border:1px solid #e3e3e3;border-radius:4px"></div>
<svg style="left:1361.5500000000002px;top:460.93499999999995px" width="16" height="16" viewBox="0 0 20 20"><g style="fill:none;stroke:#0f6cbd;stroke-linecap:round;stroke-linejoin:round;stroke-width:1.35" ><path d="M3 5 H17 M8 5 V3.8 C8 3.3 8.4 2.8 9 2.8 H11 C11.6 2.8 12 3.3 12 3.8 V5 M4.5 5 L5.6 16 C5.7 16.8 6.4 17.4 7.2 17.4 H12.8 C13.6 17.4 14.3 16.8 14.4 16 L15.5 5 M8.3 8 V14 M11.7 8 V14"/></g></svg>
<div class="bx" style="left:325px;top:493.17px;width:1070px;height:46.67px;border-bottom:1px solid #e6e6e6;"></div>
<div class="a " style="left:335.3px;top:509.77px;font-size:13.45px;color:#0f6cbd">GDN-2026-0005</div>
<div class="a " style="left:467px;top:509.70px;font-size:13.53px;color:#242424">11 Apr 2026</div>
<div class="a " style="left:573.7px;top:509.69px;font-size:13.55px;color:#0f6cbd">SO-2026-0005</div>
<div class="a " style="left:693.8px;top:509.70px;font-size:13.54px;color:#242424">PT Maju Bersama</div>
<div class="a " style="left:834.6px;top:509.57px;font-size:13.69px;color:#6b6b6b">Delivery to PT Maju Bersama — Mar 2025</div>
<svg style="left:1140px;top:513.205px" width="9" height="7" viewBox="0 0 9 7"><g style="fill:none;stroke:#107c10;stroke-linecap:round;stroke-linejoin:round;stroke-width:1.05" ><path d="M0.8 3.4 L3.2 5.8 L8.2 0.8"/></g></svg>
<div class="a " style="left:1153px;top:509.98px;font-size:13.8px;color:#107c10">Invoiced</div>
<div class="bx" style="left:1249.4px;top:499.61px;width:31.5px;height:32px;background:#fff;border:1px solid #e3e3e3;border-radius:4px"></div>
<svg style="left:1257.15px;top:507.605px" width="16" height="16" viewBox="0 0 20 20"><g style="fill:none;stroke:#0f6cbd;stroke-linecap:round;stroke-linejoin:round;stroke-width:1.35" ><path d="M5 8 V3.5 C5 2.7 5.7 2 6.5 2 H11 L16 7 V16.5 C16 17.3 15.3 18 14.5 18 H13.5 M11 2 V5.5 C11 6.3 11.7 7 12.5 7 H16"/><circle cx="6.8" cy="12.2" r="3.2"/><path d="M9.2 14.6 L11.8 17.2"/></g></svg>
<div class="bx" style="left:1284.2px;top:499.61px;width:31.5px;height:32px;background:#fff;border:1px solid #e3e3e3;border-radius:4px"></div>
<svg style="left:1291.95px;top:507.605px" width="16" height="16" viewBox="0 0 20 20"><g style="fill:none;stroke:#0f6cbd;stroke-linecap:round;stroke-linejoin:round;stroke-width:1.35" ><path d="M8 3.5 H5.5 C4.4 3.5 3.5 4.4 3.5 5.5 V14.5 C3.5 15.6 4.4 16.5 5.5 16.5 H14.5 C15.6 16.5 16.5 15.6 16.5 14.5 V12 M11 3.5 H16.5 V9 M16.5 3.5 L9.5 10.5"/></g></svg>
<div class="bx" style="left:1319.0px;top:499.61px;width:31.5px;height:32px;background:#fff;border:1px solid #e3e3e3;border-radius:4px"></div>
<svg style="left:1326.75px;top:507.605px" width="16" height="16" viewBox="0 0 20 20"><g style="fill:none;stroke:#0f6cbd;stroke-linecap:round;stroke-linejoin:round;stroke-width:1.35" ><path d="M2.6 17.4 L3.7 13.2 L13.3 3.6 C14.1 2.8 15.5 2.8 16.3 3.6 C17.1 4.4 17.1 5.8 16.3 6.6 L6.8 16.2 Z M12 4.9 L15 7.9"/></g></svg>
<div class="bx" style="left:1353.8px;top:499.61px;width:31.5px;height:32px;background:#fff;border:1px solid #e3e3e3;border-radius:4px"></div>
<svg style="left:1361.5500000000002px;top:507.605px" width="16" height="16" viewBox="0 0 20 20"><g style="fill:none;stroke:#0f6cbd;stroke-linecap:round;stroke-linejoin:round;stroke-width:1.35" ><path d="M3 5 H17 M8 5 V3.8 C8 3.3 8.4 2.8 9 2.8 H11 C11.6 2.8 12 3.3 12 3.8 V5 M4.5 5 L5.6 16 C5.7 16.8 6.4 17.4 7.2 17.4 H12.8 C13.6 17.4 14.3 16.8 14.4 16 L15.5 5 M8.3 8 V14 M11.7 8 V14"/></g></svg>
<div class="bx" style="left:325px;top:539.84px;width:1070px;height:46.67px;border-bottom:1px solid #e6e6e6;"></div>
<div class="a " style="left:335.3px;top:556.44px;font-size:13.45px;color:#0f6cbd">GDN-2026-0004</div>
<div class="a " style="left:467px;top:556.37px;font-size:13.53px;color:#242424">17 Mar 2026</div>
<div class="a " style="left:573.7px;top:556.36px;font-size:13.55px;color:#0f6cbd">SO-2026-0004</div>
<div class="a " style="left:693.8px;top:556.37px;font-size:13.54px;color:#242424">CV Harapan Jaya</div>
<div class="a " style="left:834.6px;top:556.24px;font-size:13.69px;color:#6b6b6b">Delivery to CV Harapan Jaya — Feb 2025</div>
<svg style="left:1140px;top:559.8750000000001px" width="9" height="7" viewBox="0 0 9 7"><g style="fill:none;stroke:#107c10;stroke-linecap:round;stroke-linejoin:round;stroke-width:1.05" ><path d="M0.8 3.4 L3.2 5.8 L8.2 0.8"/></g></svg>
<div class="a " style="left:1153px;top:556.65px;font-size:13.8px;color:#107c10">Invoiced</div>
<div class="bx" style="left:1249.4px;top:546.28px;width:31.5px;height:32px;background:#fff;border:1px solid #e3e3e3;border-radius:4px"></div>
<svg style="left:1257.15px;top:554.2750000000001px" width="16" height="16" viewBox="0 0 20 20"><g style="fill:none;stroke:#0f6cbd;stroke-linecap:round;stroke-linejoin:round;stroke-width:1.35" ><path d="M5 8 V3.5 C5 2.7 5.7 2 6.5 2 H11 L16 7 V16.5 C16 17.3 15.3 18 14.5 18 H13.5 M11 2 V5.5 C11 6.3 11.7 7 12.5 7 H16"/><circle cx="6.8" cy="12.2" r="3.2"/><path d="M9.2 14.6 L11.8 17.2"/></g></svg>
<div class="bx" style="left:1284.2px;top:546.28px;width:31.5px;height:32px;background:#fff;border:1px solid #e3e3e3;border-radius:4px"></div>
<svg style="left:1291.95px;top:554.2750000000001px" width="16" height="16" viewBox="0 0 20 20"><g style="fill:none;stroke:#0f6cbd;stroke-linecap:round;stroke-linejoin:round;stroke-width:1.35" ><path d="M8 3.5 H5.5 C4.4 3.5 3.5 4.4 3.5 5.5 V14.5 C3.5 15.6 4.4 16.5 5.5 16.5 H14.5 C15.6 16.5 16.5 15.6 16.5 14.5 V12 M11 3.5 H16.5 V9 M16.5 3.5 L9.5 10.5"/></g></svg>
<div class="bx" style="left:1319.0px;top:546.28px;width:31.5px;height:32px;background:#fff;border:1px solid #e3e3e3;border-radius:4px"></div>
<svg style="left:1326.75px;top:554.2750000000001px" width="16" height="16" viewBox="0 0 20 20"><g style="fill:none;stroke:#0f6cbd;stroke-linecap:round;stroke-linejoin:round;stroke-width:1.35" ><path d="M2.6 17.4 L3.7 13.2 L13.3 3.6 C14.1 2.8 15.5 2.8 16.3 3.6 C17.1 4.4 17.1 5.8 16.3 6.6 L6.8 16.2 Z M12 4.9 L15 7.9"/></g></svg>
<div class="bx" style="left:1353.8px;top:546.28px;width:31.5px;height:32px;background:#fff;border:1px solid #e3e3e3;border-radius:4px"></div>
<svg style="left:1361.5500000000002px;top:554.2750000000001px" width="16" height="16" viewBox="0 0 20 20"><g style="fill:none;stroke:#0f6cbd;stroke-linecap:round;stroke-linejoin:round;stroke-width:1.35" ><path d="M3 5 H17 M8 5 V3.8 C8 3.3 8.4 2.8 9 2.8 H11 C11.6 2.8 12 3.3 12 3.8 V5 M4.5 5 L5.6 16 C5.7 16.8 6.4 17.4 7.2 17.4 H12.8 C13.6 17.4 14.3 16.8 14.4 16 L15.5 5 M8.3 8 V14 M11.7 8 V14"/></g></svg>
<div class="bx" style="left:325px;top:586.51px;width:1070px;height:46.67px;border-bottom:1px solid #e6e6e6;"></div>
<div class="a " style="left:335.3px;top:603.11px;font-size:13.45px;color:#0f6cbd">GDN-2026-0003</div>
<div class="a " style="left:467px;top:603.04px;font-size:13.53px;color:#242424">11 Mar 2026</div>
<div class="a " style="left:573.7px;top:603.03px;font-size:13.55px;color:#0f6cbd">SO-2026-0003</div>
<div class="a " style="left:693.8px;top:603.04px;font-size:13.54px;color:#242424">PT Maju Bersama</div>
<div class="a " style="left:834.6px;top:602.91px;font-size:13.69px;color:#6b6b6b">Delivery to PT Maju Bersama — Feb 2025</div>
<svg style="left:1140px;top:606.5450000000001px" width="9" height="7" viewBox="0 0 9 7"><g style="fill:none;stroke:#107c10;stroke-linecap:round;stroke-linejoin:round;stroke-width:1.05" ><path d="M0.8 3.4 L3.2 5.8 L8.2 0.8"/></g></svg>
<div class="a " style="left:1153px;top:603.32px;font-size:13.8px;color:#107c10">Invoiced</div>
<div class="bx" style="left:1249.4px;top:592.95px;width:31.5px;height:32px;background:#fff;border:1px solid #e3e3e3;border-radius:4px"></div>
<svg style="left:1257.15px;top:600.945px" width="16" height="16" viewBox="0 0 20 20"><g style="fill:none;stroke:#0f6cbd;stroke-linecap:round;stroke-linejoin:round;stroke-width:1.35" ><path d="M5 8 V3.5 C5 2.7 5.7 2 6.5 2 H11 L16 7 V16.5 C16 17.3 15.3 18 14.5 18 H13.5 M11 2 V5.5 C11 6.3 11.7 7 12.5 7 H16"/><circle cx="6.8" cy="12.2" r="3.2"/><path d="M9.2 14.6 L11.8 17.2"/></g></svg>
<div class="bx" style="left:1284.2px;top:592.95px;width:31.5px;height:32px;background:#fff;border:1px solid #e3e3e3;border-radius:4px"></div>
<svg style="left:1291.95px;top:600.945px" width="16" height="16" viewBox="0 0 20 20"><g style="fill:none;stroke:#0f6cbd;stroke-linecap:round;stroke-linejoin:round;stroke-width:1.35" ><path d="M8 3.5 H5.5 C4.4 3.5 3.5 4.4 3.5 5.5 V14.5 C3.5 15.6 4.4 16.5 5.5 16.5 H14.5 C15.6 16.5 16.5 15.6 16.5 14.5 V12 M11 3.5 H16.5 V9 M16.5 3.5 L9.5 10.5"/></g></svg>
<div class="bx" style="left:1319.0px;top:592.95px;width:31.5px;height:32px;background:#fff;border:1px solid #e3e3e3;border-radius:4px"></div>
<svg style="left:1326.75px;top:600.945px" width="16" height="16" viewBox="0 0 20 20"><g style="fill:none;stroke:#0f6cbd;stroke-linecap:round;stroke-linejoin:round;stroke-width:1.35" ><path d="M2.6 17.4 L3.7 13.2 L13.3 3.6 C14.1 2.8 15.5 2.8 16.3 3.6 C17.1 4.4 17.1 5.8 16.3 6.6 L6.8 16.2 Z M12 4.9 L15 7.9"/></g></svg>
<div class="bx" style="left:1353.8px;top:592.95px;width:31.5px;height:32px;background:#fff;border:1px solid #e3e3e3;border-radius:4px"></div>
<svg style="left:1361.5500000000002px;top:600.945px" width="16" height="16" viewBox="0 0 20 20"><g style="fill:none;stroke:#0f6cbd;stroke-linecap:round;stroke-linejoin:round;stroke-width:1.35" ><path d="M3 5 H17 M8 5 V3.8 C8 3.3 8.4 2.8 9 2.8 H11 C11.6 2.8 12 3.3 12 3.8 V5 M4.5 5 L5.6 16 C5.7 16.8 6.4 17.4 7.2 17.4 H12.8 C13.6 17.4 14.3 16.8 14.4 16 L15.5 5 M8.3 8 V14 M11.7 8 V14"/></g></svg>
<div class="bx" style="left:325px;top:633.18px;width:1070px;height:46.67px;border-bottom:1px solid #e6e6e6;"></div>
<div class="a " style="left:335.3px;top:649.78px;font-size:13.45px;color:#0f6cbd">GDN-2026-0002</div>
<div class="a " style="left:467px;top:649.71px;font-size:13.53px;color:#242424">26 Feb 2026</div>
<div class="a " style="left:573.7px;top:649.70px;font-size:13.55px;color:#0f6cbd">SO-2026-0002</div>
<div class="a " style="left:693.8px;top:649.71px;font-size:13.54px;color:#242424">CV Harapan Jaya</div>
<div class="a " style="left:834.6px;top:649.58px;font-size:13.69px;color:#6b6b6b">Delivery to CV Harapan Jaya — Jan 2025</div>
<svg style="left:1140px;top:653.2150000000001px" width="9" height="7" viewBox="0 0 9 7"><g style="fill:none;stroke:#107c10;stroke-linecap:round;stroke-linejoin:round;stroke-width:1.05" ><path d="M0.8 3.4 L3.2 5.8 L8.2 0.8"/></g></svg>
<div class="a " style="left:1153px;top:649.99px;font-size:13.8px;color:#107c10">Invoiced</div>
<div class="bx" style="left:1249.4px;top:639.62px;width:31.5px;height:32px;background:#fff;border:1px solid #e3e3e3;border-radius:4px"></div>
<svg style="left:1257.15px;top:647.6150000000001px" width="16" height="16" viewBox="0 0 20 20"><g style="fill:none;stroke:#0f6cbd;stroke-linecap:round;stroke-linejoin:round;stroke-width:1.35" ><path d="M5 8 V3.5 C5 2.7 5.7 2 6.5 2 H11 L16 7 V16.5 C16 17.3 15.3 18 14.5 18 H13.5 M11 2 V5.5 C11 6.3 11.7 7 12.5 7 H16"/><circle cx="6.8" cy="12.2" r="3.2"/><path d="M9.2 14.6 L11.8 17.2"/></g></svg>
<div class="bx" style="left:1284.2px;top:639.62px;width:31.5px;height:32px;background:#fff;border:1px solid #e3e3e3;border-radius:4px"></div>
<svg style="left:1291.95px;top:647.6150000000001px" width="16" height="16" viewBox="0 0 20 20"><g style="fill:none;stroke:#0f6cbd;stroke-linecap:round;stroke-linejoin:round;stroke-width:1.35" ><path d="M8 3.5 H5.5 C4.4 3.5 3.5 4.4 3.5 5.5 V14.5 C3.5 15.6 4.4 16.5 5.5 16.5 H14.5 C15.6 16.5 16.5 15.6 16.5 14.5 V12 M11 3.5 H16.5 V9 M16.5 3.5 L9.5 10.5"/></g></svg>
<div class="bx" style="left:1319.0px;top:639.62px;width:31.5px;height:32px;background:#fff;border:1px solid #e3e3e3;border-radius:4px"></div>
<svg style="left:1326.75px;top:647.6150000000001px" width="16" height="16" viewBox="0 0 20 20"><g style="fill:none;stroke:#0f6cbd;stroke-linecap:round;stroke-linejoin:round;stroke-width:1.35" ><path d="M2.6 17.4 L3.7 13.2 L13.3 3.6 C14.1 2.8 15.5 2.8 16.3 3.6 C17.1 4.4 17.1 5.8 16.3 6.6 L6.8 16.2 Z M12 4.9 L15 7.9"/></g></svg>
<div class="bx" style="left:1353.8px;top:639.62px;width:31.5px;height:32px;background:#fff;border:1px solid #e3e3e3;border-radius:4px"></div>
<svg style="left:1361.5500000000002px;top:647.6150000000001px" width="16" height="16" viewBox="0 0 20 20"><g style="fill:none;stroke:#0f6cbd;stroke-linecap:round;stroke-linejoin:round;stroke-width:1.35" ><path d="M3 5 H17 M8 5 V3.8 C8 3.3 8.4 2.8 9 2.8 H11 C11.6 2.8 12 3.3 12 3.8 V5 M4.5 5 L5.6 16 C5.7 16.8 6.4 17.4 7.2 17.4 H12.8 C13.6 17.4 14.3 16.8 14.4 16 L15.5 5 M8.3 8 V14 M11.7 8 V14"/></g></svg>
<div class="bx" style="left:325px;top:679.85px;width:1070px;height:46.67px;"></div>
<div class="a " style="left:335.3px;top:696.67px;font-size:13.2px;color:#0f6cbd">GDN-2026-0001</div>
<div class="a " style="left:467px;top:696.38px;font-size:13.53px;color:#242424">13 Feb 2026</div>
<div class="a " style="left:573.7px;top:696.75px;font-size:13.1px;color:#0f6cbd">SO-2026-0001</div>
<div class="a " style="left:693.8px;top:696.38px;font-size:13.54px;color:#242424">PT Maju Bersama</div>
<div class="a " style="left:834.6px;top:696.25px;font-size:13.69px;color:#6b6b6b">Delivery to PT Maju Bersama — Jan 2025</div>
<svg style="left:1140px;top:699.8850000000001px" width="9" height="7" viewBox="0 0 9 7"><g style="fill:none;stroke:#107c10;stroke-linecap:round;stroke-linejoin:round;stroke-width:1.05" ><path d="M0.8 3.4 L3.2 5.8 L8.2 0.8"/></g></svg>
<div class="a " style="left:1153px;top:696.66px;font-size:13.8px;color:#107c10">Invoiced</div>
<div class="bx" style="left:1249.4px;top:686.29px;width:31.5px;height:32px;background:#fff;border:1px solid #e3e3e3;border-radius:4px"></div>
<svg style="left:1257.15px;top:694.2850000000001px" width="16" height="16" viewBox="0 0 20 20"><g style="fill:none;stroke:#0f6cbd;stroke-linecap:round;stroke-linejoin:round;stroke-width:1.35" ><path d="M5 8 V3.5 C5 2.7 5.7 2 6.5 2 H11 L16 7 V16.5 C16 17.3 15.3 18 14.5 18 H13.5 M11 2 V5.5 C11 6.3 11.7 7 12.5 7 H16"/><circle cx="6.8" cy="12.2" r="3.2"/><path d="M9.2 14.6 L11.8 17.2"/></g></svg>
<div class="bx" style="left:1284.2px;top:686.29px;width:31.5px;height:32px;background:#fff;border:1px solid #e3e3e3;border-radius:4px"></div>
<svg style="left:1291.95px;top:694.2850000000001px" width="16" height="16" viewBox="0 0 20 20"><g style="fill:none;stroke:#0f6cbd;stroke-linecap:round;stroke-linejoin:round;stroke-width:1.35" ><path d="M8 3.5 H5.5 C4.4 3.5 3.5 4.4 3.5 5.5 V14.5 C3.5 15.6 4.4 16.5 5.5 16.5 H14.5 C15.6 16.5 16.5 15.6 16.5 14.5 V12 M11 3.5 H16.5 V9 M16.5 3.5 L9.5 10.5"/></g></svg>
<div class="bx" style="left:1319.0px;top:686.29px;width:31.5px;height:32px;background:#fff;border:1px solid #e3e3e3;border-radius:4px"></div>
<svg style="left:1326.75px;top:694.2850000000001px" width="16" height="16" viewBox="0 0 20 20"><g style="fill:none;stroke:#0f6cbd;stroke-linecap:round;stroke-linejoin:round;stroke-width:1.35" ><path d="M2.6 17.4 L3.7 13.2 L13.3 3.6 C14.1 2.8 15.5 2.8 16.3 3.6 C17.1 4.4 17.1 5.8 16.3 6.6 L6.8 16.2 Z M12 4.9 L15 7.9"/></g></svg>
<div class="bx" style="left:1353.8px;top:686.29px;width:31.5px;height:32px;background:#fff;border:1px solid #e3e3e3;border-radius:4px"></div>
<svg style="left:1361.5500000000002px;top:694.2850000000001px" width="16" height="16" viewBox="0 0 20 20"><g style="fill:none;stroke:#0f6cbd;stroke-linecap:round;stroke-linejoin:round;stroke-width:1.35" ><path d="M3 5 H17 M8 5 V3.8 C8 3.3 8.4 2.8 9 2.8 H11 C11.6 2.8 12 3.3 12 3.8 V5 M4.5 5 L5.6 16 C5.7 16.8 6.4 17.4 7.2 17.4 H12.8 C13.6 17.4 14.3 16.8 14.4 16 L15.5 5 M8.3 8 V14 M11.7 8 V14"/></g></svg>
<div class="bx" style="left:333.0px;top:742px;width:25.5px;height:23.5px;border:1px solid #f6f6f6;border-radius:4px"></div>
<div class="a" style="left:333.0px;top:747.10px;width:25.5px;text-align:center;font-size:14px;color:#bdbdbd">«</div>
<div class="bx" style="left:362.1px;top:742px;width:25.5px;height:23.5px;border:1px solid #f6f6f6;border-radius:4px"></div>
<div class="a" style="left:362.1px;top:747.10px;width:25.5px;text-align:center;font-size:14px;color:#bdbdbd">‹</div>
<div class="bx" style="left:391.1px;top:742px;width:25.5px;height:23.5px;background:#0a66c2;border-radius:4px"></div>
<div class="a" style="left:391.1px;top:747.17px;width:25.5px;text-align:center;font-size:14.5px;font-weight:700;color:#fff">1</div>
<div class="bx" style="left:420.1px;top:742px;width:25.5px;height:23.5px;border:1px solid #f6f6f6;border-radius:4px"></div>
<div class="a" style="left:420.1px;top:747.10px;width:25.5px;text-align:center;font-size:14px;color:#bdbdbd">›</div>
<div class="bx" style="left:449.2px;top:742px;width:25.5px;height:23.5px;border:1px solid #f6f6f6;border-radius:4px"></div>
<div class="a" style="left:449.2px;top:747.10px;width:25.5px;text-align:center;font-size:14px;color:#bdbdbd">»</div>
<div class="a " style="left:486.5px;top:747.98px;font-size:13.2px;color:#707070;letter-spacing:-0.35px">1–6 of 6</div>
<div class="a " style="left:1289.4px;top:747.98px;font-size:12.96px;color:#707070">Rows:</div>
<div class="bx" style="left:1332.5px;top:743px;width:55px;height:22px;border:1px solid #ececec;border-radius:4px;background:#fff"></div>
<div class="a " style="left:1342.6px;top:747.10px;font-size:14px;color:#242424">20</div>
<svg style="left:1374px;top:751.5px" width="9" height="6" viewBox="0 0 9 6"><g style="fill:none;stroke:#242424;stroke-linecap:round;stroke-linejoin:round;stroke-width:1.5" ><path d="M1 1 L4.5 4.6 L8 1"/></g></svg>
</body></html>
